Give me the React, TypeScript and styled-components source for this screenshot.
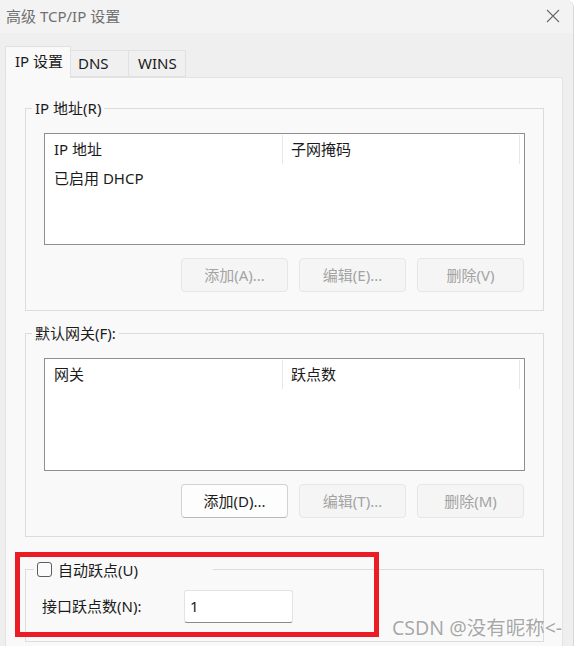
import styled, { createGlobalStyle } from 'styled-components';

const GlobalStyle = createGlobalStyle`
  html, body {
    margin: 0;
    padding: 0;
    background: #ffffff;
  }
  body {
    font-family: 'Noto Sans', 'Noto Sans CJK SC', sans-serif;
    font-size: 15px;
    color: #1b1b1b;
  }
`;

const Window = styled.div`
  position: relative;
  width: 573px;
  height: 646px;
  overflow: hidden;
  background: #efefef;
  border-right: 1px solid #d8d8d8;
  border-top-right-radius: 8px;
`;

const TitleBar = styled.div`
  height: 33px;
  display: flex;
  align-items: center;
  justify-content: space-between;
  padding: 0 13px 0 6px;
  background: #f3f3f3;
  box-sizing: border-box;
`;

const Title = styled.span`
  color: #707070;
  font-size: 15px;
  line-height: 20px;
  margin-top: -2px;
`;

const CloseButton = styled.button`
  width: 14px;
  height: 14px;
  padding: 0;
  border: 0;
  background: transparent;
  display: flex;
  margin-top: -1px;
`;

const TabStrip = styled.div`
  display: flex;
  align-items: flex-end;
  height: 31px;
  margin-top: 13px;
  padding-left: 5px;
`;

const Tab = styled.div<{ $active?: boolean; $width: number; $pad: number }>`
  box-sizing: border-box;
  width: ${(p) => p.$width}px;
  height: ${(p) => (p.$active ? 32 : 27)}px;
  padding-left: ${(p) => p.$pad}px;
  margin-bottom: ${(p) => (p.$active ? -1 : 0)}px;
  display: flex;
  align-items: center;
  background: ${(p) => (p.$active ? '#f9f9f9' : '#f0f0f0')};
  border: 1px solid #e1e1e1;
  border-bottom: ${(p) => (p.$active ? 'none' : '1px solid #e1e1e1')};
  border-left: ${(p) => (p.$active ? '1px solid #e1e1e1' : 'none')};
  position: relative;
  z-index: ${(p) => (p.$active ? 1 : 0)};
  font-size: 15px;
  color: #1b1b1b;
  padding-bottom: ${(p) => (p.$active ? 4 : 1)}px;
`;

const Panel = styled.div`
  box-sizing: border-box;
  margin-left: 5px;
  width: 558px;
  height: 600px;
  background: #f9f9f9;
  border: 1px solid #e3e3e3;
  padding: 20px 18px 0 19px;
  display: flex;
  flex-direction: column;
`;

const Group = styled.fieldset<{ $gap?: number }>`
  margin: ${(p) => p.$gap ?? 0}px 0 0 0;
  padding: 0;
  border: 1px solid #dcdcdc;
  min-width: 0;
`;

const GroupBody = styled.div<{ $top?: number }>`
  padding: ${(p) => p.$top ?? 15}px 18px 18px 18px;
`;

const Legend = styled.legend`
  margin-left: 6px;
  padding: 0 3px;
  line-height: 20px;
  height: 20px;
  font-size: 15px;
  color: #1b1b1b;
`;

const CheckLegend = styled.legend`
  box-sizing: border-box;
  margin-left: 8px;
  padding: 0 0 0 3px;
  width: 179px;
  height: 20px;
  display: flex;
  align-items: center;
  gap: 6px;
  font-size: 15px;
  color: #1b1b1b;
`;

const CheckBox = styled.span`
  box-sizing: border-box;
  width: 15px;
  height: 15px;
  border: 1px solid #5d5d5d;
  border-radius: 3px;
  background: #fbfbfb;
`;

const ListBox = styled.div<{ $height: number }>`
  box-sizing: border-box;
  height: ${(p) => p.$height}px;
  background: #ffffff;
  border: 1px solid #8b8f96;
  display: flex;
  flex-direction: column;
`;

const HeaderRow = styled.div`
  display: grid;
  grid-template-columns: 238px 237px 1fr;
  height: 31px;
`;

const HeaderCell = styled.div<{ $divider?: boolean }>`
  display: flex;
  align-items: center;
  padding-left: ${(p) => (p.$divider ? 8 : 9)}px;
  padding-bottom: 2px;
  border-right: 1px solid #e8e8e8;
  margin: 1px 0;
  font-size: 15px;
`;

const DataRow = styled.div`
  height: 24px;
  display: flex;
  align-items: center;
  padding-left: 9px;
  padding-bottom: 2px;
  font-size: 15px;
`;

const ButtonRow = styled.div`
  display: flex;
  justify-content: flex-end;
  gap: 11px;
  margin-top: 13px;
  padding-right: 1px;
`;

const Button = styled.button<{ $enabled?: boolean }>`
  box-sizing: border-box;
  width: 107px;
  height: 34px;
  border-radius: 4px;
  font-family: 'Noto Sans', 'Noto Sans CJK SC', sans-serif;
  font-size: 15px;
  background: ${(p) => (p.$enabled ? '#fdfdfd' : '#f5f5f5')};
  color: ${(p) => (p.$enabled ? '#1b1b1b' : '#a3a3a3')};
  border: 1px solid ${(p) => (p.$enabled ? '#d2d2d2' : '#e6e6e6')};
  border-bottom-color: ${(p) => (p.$enabled ? '#b8b8b8' : '#e6e6e6')};
  padding: 0 0 2px 0;
`;

const FieldRow = styled.div`
  display: flex;
  align-items: center;
  margin-left: -2px;
`;

const FieldLabel = styled.span`
  width: 142px;
  font-size: 15px;
  padding-bottom: 2px;
`;

const NumberInput = styled.div`
  box-sizing: border-box;
  width: 109px;
  height: 33px;
  background: #ffffff;
  border: 1px solid #e3e3e3;
  border-bottom: 1px solid #8a8a8a;
  border-radius: 3px;
  padding: 0 0 2px 5px;
  display: flex;
  align-items: center;
  font-size: 15px;
`;

const Highlight = styled.div`
  position: absolute;
  left: 15px;
  top: 552px;
  width: 364px;
  height: 85px;
  box-sizing: border-box;
  border: 5px solid #ea1d25;
  pointer-events: none;
`;

const Watermark = styled.div`
  position: absolute;
  left: 392px;
  top: 615px;
  font-size: 19.5px;
  line-height: 26px;
  color: rgba(110, 110, 110, 0.6);
  white-space: nowrap;
  text-shadow: 0 0 2px rgba(255, 255, 255, 0.8);
`;

export default function App() {
  return (
    <Window>
      <GlobalStyle />
      <TitleBar>
        <Title>高级 TCP/IP 设置</Title>
        <CloseButton aria-label="关闭">
          <svg width="14" height="14" viewBox="0 0 14 14">
            <path d="M1 1 L13 13 M13 1 L1 13" stroke="#6a6a6a" strokeWidth="1.1" fill="none" />
          </svg>
        </CloseButton>
      </TitleBar>
      <TabStrip>
        <Tab $active $width={66} $pad={9}>
          IP 设置
        </Tab>
        <Tab $width={58} $pad={7}>
          DNS
        </Tab>
        <Tab $width={57} $pad={9}>
          WINS
        </Tab>
      </TabStrip>
      <Panel>
        <Group>
          <Legend>IP 地址(R)</Legend>
          <GroupBody>
            <ListBox $height={112}>
              <HeaderRow>
                <HeaderCell>IP 地址</HeaderCell>
                <HeaderCell $divider>子网掩码</HeaderCell>
                <div />
              </HeaderRow>
              <DataRow>已启用 DHCP</DataRow>
            </ListBox>
            <ButtonRow>
              <Button disabled>添加(A)...</Button>
              <Button disabled>编辑(E)...</Button>
              <Button disabled>删除(V)</Button>
            </ButtonRow>
          </GroupBody>
        </Group>
        <Group $gap={12}>
          <Legend>默认网关(F):</Legend>
          <GroupBody>
            <ListBox $height={113}>
              <HeaderRow>
                <HeaderCell>网关</HeaderCell>
                <HeaderCell $divider>跃点数</HeaderCell>
                <div />
              </HeaderRow>
            </ListBox>
            <ButtonRow>
              <Button $enabled>添加(D)...</Button>
              <Button disabled>编辑(T)...</Button>
              <Button disabled>删除(M)</Button>
            </ButtonRow>
          </GroupBody>
        </Group>
        <Group $gap={22}>
          <CheckLegend>
            <CheckBox />
            自动跃点(U)
          </CheckLegend>
          <GroupBody $top={11}>
            <FieldRow>
              <FieldLabel>接口跃点数(N):</FieldLabel>
              <NumberInput>1</NumberInput>
            </FieldRow>
          </GroupBody>
        </Group>
      </Panel>
      <Highlight />
      <Watermark>CSDN @没有昵称&lt;-</Watermark>
    </Window>
  );
}
